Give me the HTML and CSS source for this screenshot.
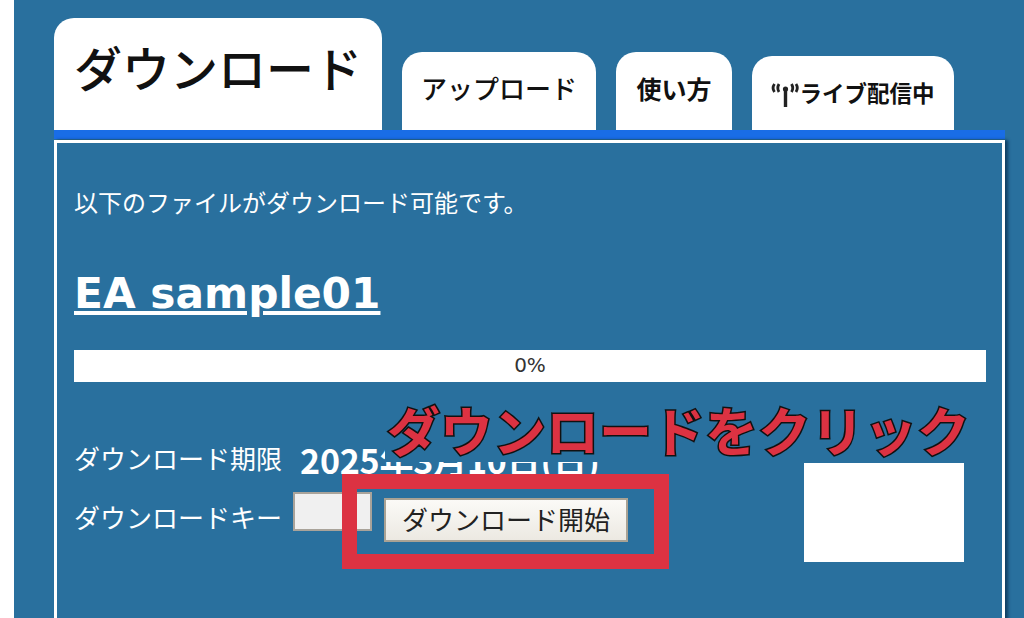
FILE: index.html
```html
<!DOCTYPE html>
<html lang="ja">
<head>
    <meta charset="UTF-8">
    <title>ダウンロード</title>
    <link rel="stylesheet" href="styles.css">
</head>
<body>
    <div class="page">
        <ul class="tabs">
            <li class="tab tab-active">ダウンロード</li>
            <li class="tab tab-upload">アップロード</li>
            <li class="tab tab-usage">使い方</li>
            <li class="tab tab-live">
                <svg class="live-icon" width="28" height="26" viewBox="0 0 28 26" aria-hidden="true">
                    <path d="M12.8 6h3.4v18h-3.4z" fill="#222"/>
                    <circle cx="14.5" cy="6" r="2.6" fill="#222"/>
                    <path d="M3.5 1Q.6 5 3.5 9M8 1Q5.6 5 8 9M20.5 1Q23 5 20.5 9M25 1Q27.6 5 25 9" stroke="#222" stroke-width="2.8" fill="none"/>
                </svg>
                ライブ配信中
            </li>
        </ul>
        <div class="tab-line"></div>
        <div class="panel">
            <p class="lead">以下のファイルがダウンロード可能です。</p>
            <h2 class="file-name">EA sample01</h2>
            <div class="progress">0%</div>
            <div class="form-area">
                <div class="form-rows">
                    <div class="row row-limit">
                        <span class="label label-limit">ダウンロード期限</span>
                        <strong class="date">2025年3月10日(日)</strong>
                    </div>
                    <div class="row row-key">
                        <span class="label label-key">ダウンロードキー</span>
                        <input class="key-input" type="text">
                        <button class="start-btn" type="button">ダウンロード開始</button>
                    </div>
                </div>
                <div class="white-box"></div>
            </div>
        </div>
    </div>

    <!-- 注釈 -->
    <div class="callout">ダウンロードをクリック</div>
    <div class="callout-box"></div>
</body>
</html>
```

FILE: styles.css
```css
html, body {
    height: 100%;
}
body {
    margin: 0;
    background: #fff;
    overflow: hidden;
    font-family: "Noto Sans CJK JP", "Liberation Sans", sans-serif;
    color: #fff;
}
.page {
    margin-left: 14px;
    height: 618px;
    padding: 18px 19px 0 40px;
    background: #29709e;
    box-sizing: border-box;
    overflow: hidden;
}

/* タブ */
.tabs {
    display: flex;
    align-items: flex-end;
    gap: 20px;
    height: 112px;
    margin: 0;
    padding: 0;
    list-style: none;
}
.tab {
    display: flex;
    justify-content: center;
    background: #fff;
    color: #111;
    border-radius: 20px 20px 0 0;
    box-sizing: border-box;
    font-weight: 500;
    white-space: nowrap;
}
.tab-active {
    width: 328px;
    height: 112px;
    padding-top: 10px;
    font-size: 48px;
    line-height: 76px;
}
.tab-upload {
    width: 194px;
    height: 78px;
    padding-top: 16px;
    font-size: 26px;
    line-height: 40px;
}
.tab-usage {
    width: 116px;
    height: 78px;
    padding-top: 16px;
    font-size: 25px;
    font-weight: 700;
    line-height: 40px;
}
.tab-live {
    width: 202px;
    height: 74px;
    padding-top: 16px;
    font-size: 22.5px;
    font-weight: 700;
    line-height: 40px;
}
.live-icon {
    margin-top: 11px;
}
.tab-line {
    height: 9px;
    background: #196de6;
}

/* パネル */
.panel {
    height: 480px;
    margin-top: 1px;
    padding: 0 16px 0 17px;
    border: solid #fff;
    border-width: 3px 3px 0;
    box-shadow: 3px 0 3px rgba(0, 30, 60, 0.6);
}
.lead {
    margin: 0;
    padding-top: 41px;
    font-size: 24px;
    line-height: 36px;
}
.file-name {
    margin: 49px 0 0;
    font-family: "DejaVu Sans", sans-serif;
    font-size: 42.3px;
    line-height: 50px;
    font-weight: 700;
    text-decoration: underline;
}
.progress {
    height: 32px;
    margin-top: 31px;
    background: #fff;
    color: #333;
    text-align: center;
    font-family: "DejaVu Sans", sans-serif;
    font-size: 20px;
    line-height: 30px;
}

.form-area {
    display: flex;
    justify-content: space-between;
    align-items: flex-start;
    margin-top: 57px;
    padding-right: 22px;
}
.row {
    display: flex;
    align-items: center;
}
.row-limit {
    height: 40px;
}
.row-key {
    height: 52px;
    margin-top: 15px;
}
.label {
    font-size: 26px;
}
.label-limit {
    margin-top: -3px;
}
.label-key {
    margin-top: -7px;
}
.date {
    margin-left: 18px;
    font-size: 34px;
    letter-spacing: -0.2px;
}
.key-input {
    width: 79px;
    height: 39px;
    margin: -17px 0 0 11px;
    padding: 0;
    background: #f0f0f0;
    border: 2px solid #a9a39a;
    box-sizing: border-box;
}
.start-btn {
    width: 244px;
    height: 44px;
    margin-left: 12px;
    padding: 0 0 3px;
    background: linear-gradient(#fbfaf7, #ece9e2);
    border: 2px solid #a9a294;
    color: #222;
    font-family: inherit;
    font-size: 26px;
}
.white-box {
    width: 160px;
    height: 99px;
    margin-top: 24px;
    background: #fff;
}

/* 注釈 */
.callout {
    position: absolute;
    left: 385px;
    top: 400px;
    height: 62px;
    padding: 0 6px 0 2px;
    background: #29709e;
    color: #dc3242;
    font-size: 53px;
    line-height: 58px;
    font-weight: 700;
    white-space: nowrap;
    -webkit-text-stroke: 3px #111;
    paint-order: stroke fill;
}
.callout-box {
    position: absolute;
    left: 342px;
    top: 474px;
    width: 297px;
    height: 65px;
    border: 15px solid #dc3242;
}
```
